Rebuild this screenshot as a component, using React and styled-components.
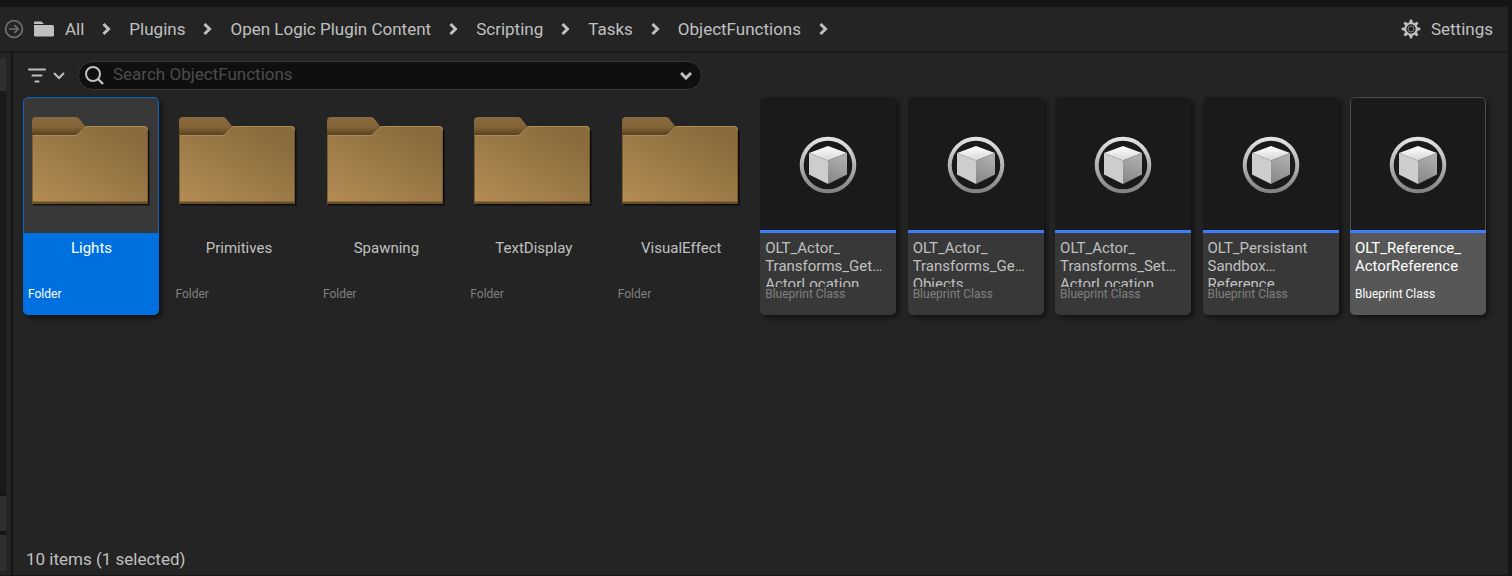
import React, { useState } from "react";
import styled, { createGlobalStyle, css } from "styled-components";

const color = {
  edge: "#151515",
  panel: "#242424",
  recessed: "#1a1a1a",
  raised: "#2f2f2f",
  card: "#383838",
  cardHover: "#575757",
  input: "#0f0f0f",
  text: "#c0c0c0",
  muted: "#808080",
  accent: "#0070e0",
  blueprint: "#3f7efb",
};

const GlobalStyle = createGlobalStyle`
  * { box-sizing: border-box; }
  body {
    margin: 0;
    background: ${color.panel};
    color: ${color.text};
    font-family: Roboto, "Liberation Sans", sans-serif;
    font-size: 17px;
    line-height: 20px;
  }
  button, input { font: inherit; color: inherit; }
  button { padding: 0; border: 0; background: none; cursor: pointer; }
  svg { display: block; flex: none; }
`;

const Window = styled.div`
  display: flex;
  flex-direction: column;
  min-height: 100vh;
  border: solid ${color.edge};
  border-width: 7px 4px 1px 0;
`;

const Header = styled.header`
  display: flex;
  align-items: center;
  height: 46px;
  padding: 0 15px 0 4px;
  border-bottom: 2px solid ${color.recessed};
`;

const IconButton = styled.button`
  display: flex;
  align-items: center;
  gap: ${(p) => p.$gap || 0}px;
`;

const Breadcrumbs = styled.nav`
  flex: 1;
  display: flex;
  align-items: center;
  gap: 18px;
  margin-left: 10px;
`;

const Crumb = styled.a`
  display: flex;
  align-items: center;
  gap: 10px;
  color: inherit;
  text-decoration: none;
  white-space: nowrap;
`;

const Body = styled.div`
  flex: 1;
  display: flex;
`;

const Sources = styled.aside`
  display: flex;
  flex-direction: column;
  gap: 4px;
  width: 13px;
  padding: 5px 5px 4px 0;
  border-right: 2px solid ${color.edge};
`;

const SourceTree = styled.div`
  flex: 1;
  background: ${color.recessed};
  border-bottom: 3px solid ${color.edge};
  margin-bottom: -4px;
`;

const SourceHeading = styled.div`
  height: ${(p) => p.$height}px;
  background: ${color.raised};
  margin-bottom: ${(p) => (p.$flush ? -4 : 0)}px;
  box-shadow: 0 4px 0 ${(p) => (p.$divided ? color.edge : "transparent")};
`;

const Assets = styled.main`
  flex: 1;
  min-width: 0;
  display: flex;
  flex-direction: column;
`;

const Toolbar = styled.div`
  display: flex;
  align-items: center;
  gap: 13px;
  padding: 8px 14px 7px;
`;

const SearchBox = styled.div`
  display: flex;
  align-items: center;
  gap: 9px;
  flex: 0 1 624px;
  min-width: 240px;
  height: 29px;
  padding: 0 9px 0 6px;
  border: 1px solid ${color.card};
  border-radius: 15px;
  background: ${color.input};
`;

const SearchInput = styled.input`
  flex: 1;
  min-width: 0;
  padding: 0 0 3px;
  border: 0;
  outline: 0;
  background: none;
  &::placeholder { color: #4c4c4c; opacity: 1; }
`;

const TileGrid = styled.ul`
  flex: 1;
  display: grid;
  grid-template-columns: repeat(auto-fill, 136px);
  justify-content: space-between;
  align-content: start;
  gap: 11px;
  margin: 0;
  padding: 0 22px 16px 10px;
  list-style: none;
`;

const Tile = styled.button`
  display: flex;
  flex-direction: column;
  width: 100%;
  height: 218px;
  border-radius: 5px;
  overflow: hidden;
  text-align: left;
  --title: ${color.text};
  --type: ${color.muted};

  ${(p) => p.$kind === "blueprint" && css`
    --thumb: ${color.recessed};
    --info: ${color.card};
    box-shadow: 3px 3px 5px rgba(0, 0, 0, 0.5);
  `}
  ${(p) => p.$active && css`
    --title: #fff;
    --type: #fff;
    --info: ${color.cardHover};
    --outline: #4c4c4c;
  `}
  ${(p) => p.$selected && css`
    --title: #fff;
    --type: #fff;
    --thumb: ${color.card};
    --info: ${color.accent};
    --outline: #0d66c2;
    box-shadow: 3px 3px 5px rgba(0, 0, 0, 0.5);
  `}
`;

const Thumb = styled.span`
  display: flex;
  justify-content: center;
  height: ${(p) => (p.$kind === "blueprint" ? 133 : 136)}px;
  padding-top: ${(p) => (p.$kind === "blueprint" ? 38 : 18)}px;
  border: 1px solid var(--outline, transparent);
  border-bottom: 0;
  border-radius: 5px 5px 0 0;
  background: var(--thumb, transparent) border-box;
`;

const TypeStripe = styled.span`
  height: 3px;
  background: ${color.blueprint};
`;

const Info = styled.span`
  flex: 1;
  display: flex;
  flex-direction: column;
  padding: 6px 4px 6px 5px;
  background: var(--info, transparent);
`;

const Title = styled.span`
  height: 48px;
  overflow: hidden;
  color: var(--title);
  font-size: 15px;
  line-height: 18px;
  text-align: ${(p) => (p.$kind === "folder" ? "center" : "left")};
  white-space: pre;
`;

const Type = styled.span`
  color: var(--type);
  font-size: 12px;
  line-height: 14px;
`;

const Status = styled.footer`
  padding: 0 13px 6px;
`;

const Chevron = ({ down, thin }) => (
  <svg width={down ? 12 : 9} height={down ? 9 : 14} viewBox={down ? "0 0 12 9" : "0 0 9 14"} fill="none"
    stroke={color.text} strokeWidth={thin ? 2 : 3} aria-hidden="true">
    <path d={down ? "M1 2l5 5 5-5" : "M1.5 2l5 5-5 5"} />
  </svg>
);

const ForwardIcon = () => (
  <svg width="20" height="20" viewBox="0 0 20 20" fill="none" stroke="#707070" strokeWidth="1.7" aria-hidden="true">
    <circle cx="10" cy="10" r="8.4" />
    <path d="M5 10h9M10.4 6.2L14.2 10l-3.8 3.8" />
  </svg>
);

const SmallFolderIcon = () => (
  <svg width="21" height="16" viewBox="0 0 21 16" fill={color.text} aria-hidden="true">
    <path d="M0 3V1.5Q0 .5 1 .5h6.5L10 3z" />
    <path d="M0 4h18.5Q20 4 20 5.500V14q0 1.500-1.500 1.500h-17Q0 15.500 0 14z" />
  </svg>
);

const TEETH = [0, 45, 90, 135, 180, 225, 270, 315];

const GearIcon = () => (
  <svg width="20" height="20" viewBox="-10 -10 20 20" aria-hidden="true">
    <g fill={color.text}>
      {TEETH.map((a) => (
        <path key={a} d="M-2-6L-1-9.400h2L2-6z" transform={`rotate(${a})`} />
      ))}
    </g>
    <circle r="5.700" fill="none" stroke={color.text} strokeWidth="2" />
    <circle r="3" fill="none" stroke="#858585" strokeWidth="1" />
  </svg>
);

const FilterIcon = () => (
  <svg width="20" height="16" viewBox="0 0 20 16" stroke={color.text} strokeWidth="2" strokeLinecap="round" aria-hidden="true">
    <path d="M2 1.500h16M5.500 7.500h9M8.500 13.500h3" />
  </svg>
);

const SearchIcon = () => (
  <svg width="19" height="19" viewBox="0 0 19 19" fill="none" stroke={color.text} strokeWidth="2" aria-hidden="true">
    <circle cx="8" cy="8" r="7" />
    <path d="M13 13l5 5" strokeWidth="2.400" />
  </svg>
);

const FolderArt = () => (
  <svg width="120" height="92" viewBox="0 0 120 92" aria-hidden="true">
    <defs>
      <linearGradient id="folderFront" x1="0" y1="1" x2="0.800" y2="0.100">
        <stop offset="0" stopColor="#b58d54" />
        <stop offset="1" stopColor="#896b3e" />
      </linearGradient>
      <linearGradient id="folderBack" x1="0" y1="0" x2="0" y2="1">
        <stop offset="0" stopColor="#8a6a3d" />
        <stop offset="0.550" stopColor="#836439" />
        <stop offset="1" stopColor="#57421f" />
      </linearGradient>
    </defs>
    <path d="M3 20h46l6-7h60q4 0 4 4v73H3z" fill="#000" opacity="0.350" />
    <path d="M2 20h46l6-8h60q4 0 4 4v73H2z" fill="#000" opacity="0.500" />
    <path d="M1 19V5q0-4 4-4h40q2 0 3 1.500L54 10l-8 9H1z" fill="url(#folderBack)" />
    <path d="M1 19h43q2.500 0 4-2l4.500-5q1.500-2 4-2H113q4 0 4 4v73.500H1z" fill="url(#folderFront)" />
    <path d="M1 19.500h43q2.500 0 4-2l4.500-5q1.500-2 4-2H113q3 0 3.500 3" fill="none" stroke="#b08a52" strokeWidth="1" />
    <path d="M1.500 19v68M116.500 14v73" stroke="#6b5026" strokeWidth="1" opacity="0.700" />
    <path d="M1 86.500h116" stroke="#6b5026" strokeWidth="2" />
  </svg>
);

const BlueprintArt = () => (
  <svg width="58" height="58" viewBox="0 0 58 58" aria-hidden="true">
    <defs>
      <linearGradient id="ring" x1="0" y1="0" x2="0" y2="1">
        <stop offset="0" stopColor="#e6e6e6" />
        <stop offset="1" stopColor="#808080" />
      </linearGradient>
      <linearGradient id="cubeTop" x1="0" y1="0" x2="0" y2="1">
        <stop offset="0" stopColor="#fff" />
        <stop offset="1" stopColor="#d6d6d6" />
      </linearGradient>
      <linearGradient id="cubeRight" x1="0.300" y1="0" x2="0" y2="1">
        <stop offset="0" stopColor="#adadad" />
        <stop offset="1" stopColor="#858585" />
      </linearGradient>
    </defs>
    <path fillRule="evenodd" fill="url(#ring)"
      d="M29 .7a28.300 28.300 0 1 0 0 56.600a28.300 28.300 0 1 0 0-56.600zM29 4.700a24.300 24.300 0 1 1 0 48.600a24.300 24.300 0 1 1 0-48.600z" />
    <path d="M29 10l19 7-19 7.500L10 17z" fill="url(#cubeTop)" />
    <path d="M10 17l19 7.500V48l-19-9.500z" fill="#cdcdcd" />
    <path d="M48 17l-19 7.500V48l19-9.500z" fill="url(#cubeRight)" />
  </svg>
);

const PATH = ["All", "Plugins", "Open Logic Plugin Content", "Scripting", "Tasks", "ObjectFunctions"];

const ITEMS = [
  { kind: "folder", title: "Lights" },
  { kind: "folder", title: "Primitives" },
  { kind: "folder", title: "Spawning" },
  { kind: "folder", title: "TextDisplay" },
  { kind: "folder", title: "VisualEffect" },
  { kind: "blueprint", title: "OLT_Actor_\nTransforms_Get…\nActorLocation" },
  { kind: "blueprint", title: "OLT_Actor_\nTransforms_Ge…\nObjects" },
  { kind: "blueprint", title: "OLT_Actor_\nTransforms_Set…\nActorLocation" },
  { kind: "blueprint", title: "OLT_Persistant\nSandbox…\nReference" },
  { kind: "blueprint", title: "OLT_Reference_\nActorReference", active: true },
];

function AssetTile({ item, selected, onSelect }) {
  const { kind, title, active } = item;
  return (
    <li>
      <Tile type="button" $kind={kind} $active={active} $selected={selected} aria-pressed={selected} onClick={onSelect}>
        <Thumb $kind={kind}>{kind === "folder" ? <FolderArt /> : <BlueprintArt />}</Thumb>
        {kind === "blueprint" && <TypeStripe />}
        <Info>
          <Title $kind={kind}>{title}</Title>
          <Type>{kind === "folder" ? "Folder" : "Blueprint Class"}</Type>
        </Info>
      </Tile>
    </li>
  );
}

export default function App() {
  const [selected, setSelected] = useState(0);
  return (
    <>
      <GlobalStyle />
      <Window>
        <Header>
          <IconButton type="button" aria-label="Forward"><ForwardIcon /></IconButton>
          <Breadcrumbs aria-label="Path">
            {PATH.map((name, i) => (
              <React.Fragment key={name}>
                <Crumb href="#">
                  {i === 0 && <SmallFolderIcon />}
                  {name}
                </Crumb>
                <Chevron />
              </React.Fragment>
            ))}
          </Breadcrumbs>
          <IconButton type="button" $gap={10}><GearIcon />Settings</IconButton>
        </Header>
        <Body>
          <Sources aria-label="Sources">
            <SourceHeading $height={33} $flush />
            <SourceTree />
            <SourceHeading $height={35} $divided />
            <SourceHeading $height={36} />
          </Sources>
          <Assets>
            <Toolbar>
              <IconButton type="button" $gap={6} aria-label="Filters"><FilterIcon /><Chevron down thin /></IconButton>
              <SearchBox>
                <SearchIcon />
                <SearchInput type="text" aria-label="Search ObjectFunctions" placeholder="Search ObjectFunctions" />
                <IconButton type="button" aria-label="Search history"><Chevron down /></IconButton>
              </SearchBox>
            </Toolbar>
            <TileGrid>
              {ITEMS.map((item, i) => (
                <AssetTile key={item.title} item={item} selected={i === selected} onSelect={() => setSelected(i)} />
              ))}
            </TileGrid>
            <Status>10 items (1 selected)</Status>
          </Assets>
        </Body>
      </Window>
    </>
  );
}
